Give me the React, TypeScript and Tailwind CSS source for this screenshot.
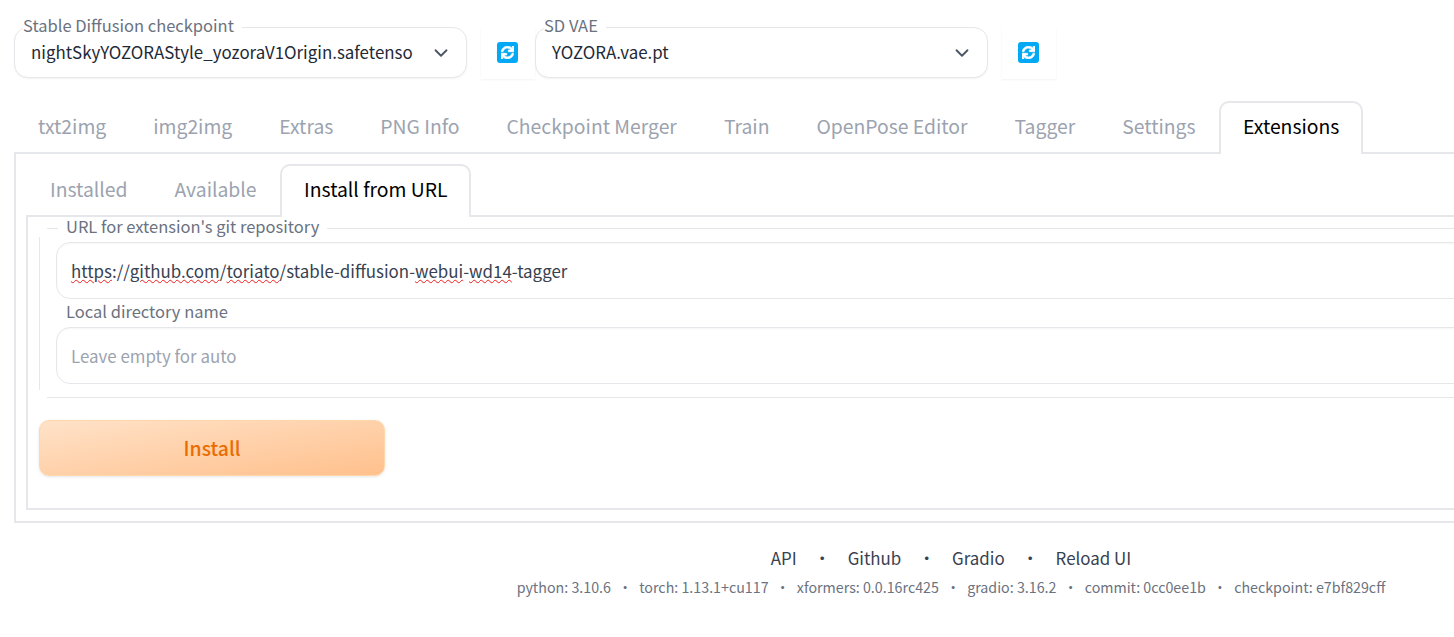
import React from "react";
import { FaSync } from "react-icons/fa";
import { ChevronDown } from "lucide-react";

const font = { fontFamily: '"Noto Sans CJK SC", "Noto Sans", sans-serif' };

function Dropdown({ label, value }: { label: string; value: string }) {
  return (
    <div className="relative w-[453px] h-[51px] mt-[27px] rounded-[14px] border border-[#e5e7eb] bg-white shadow-[0_1px_2px_rgba(0,0,0,0.05)] flex items-center pl-[16px] pr-[14px] shrink-0">
      <span className="absolute -top-[14px] left-[8px] bg-white pr-[8px] text-[16.5px] leading-[22px] text-[#6b7280]">{label}</span>
      <span className="flex-1 mr-[15px] pb-[1px] text-[16.9px] leading-[24px] text-[#1f2937] whitespace-nowrap">{value}</span>
      <ChevronDown size={22} strokeWidth={2} className="text-[#4b5563]" />
    </div>
  );
}

function Refresh() {
  return (
    <div className="ml-[14px] mt-[27px] w-[54px] h-[52px] pr-[1px] pb-[2px] bg-white shadow-[0_1px_2px_rgba(0,0,0,0.05)] flex items-center justify-center shrink-0">
      <span className="w-[21px] h-[21px] rounded-[3px] bg-[#03a9f4] flex items-center justify-center">
        <FaSync size={13} color="white" stroke="white" strokeWidth={30} />
      </span>
    </div>
  );
}

function Tab({ label, active }: { label: string; active?: boolean }) {
  return active ? (
    <div className="relative z-10 -mb-[2px] h-[53px] pb-[3px] px-[22px] flex items-center border-2 border-b-0 border-[#e5e7eb] rounded-t-[10px] bg-white text-[19.35px] text-black whitespace-nowrap">
      {label}
    </div>
  ) : (
    <div className="h-[51px] pt-[1px] px-[23.5px] flex items-center text-[19.35px] text-[#9ca3af] whitespace-nowrap">{label}</div>
  );
}

function Wavy({ children }: { children: React.ReactNode }) {
  return <span className="underline decoration-wavy decoration-[1.2px] decoration-[#ee1c1c] underline-offset-[1px]">{children}</span>;
}

export default function App() {
  return (
    <div className="w-[1454px] h-[637px] overflow-hidden bg-white" style={font}>
      <div className="w-[1902px] px-[14px]">
        <div className="flex items-start h-[101px]">
          <Dropdown label="Stable Diffusion checkpoint" value="nightSkyYOZORAStyle_yozoraV1Origin.safetenso" />
          <Refresh />
          <Dropdown label="SD VAE" value="YOZORA.vae.pt" />
          <Refresh />
        </div>

        <div className="flex items-end h-[51px] pl-[0.5px]">
          {["txt2img", "img2img", "Extras", "PNG Info", "Checkpoint Merger", "Train", "OpenPose Editor", "Tagger", "Settings"].map((t) => (
            <Tab key={t} label={t} />
          ))}
          <Tab label="Extensions" active />
        </div>

        <div className="border-2 border-[#e5e7eb] h-[371px] px-[10px] pt-[10px]">
          <div className="flex items-end h-[51px] pl-[0.5px]">
            <Tab label="Installed" />
            <Tab label="Available" />
            <Tab label="Install from URL" active />
          </div>
          <div className="border-2 border-[#e5e7eb] h-[295px] pl-[11px] pt-[11px]">
            <div className="relative h-[170px] pl-[17px] pt-[14px]">
              <div className="absolute left-0 top-[9px] h-[153px] w-px bg-[#e5e7eb]" />
              <div className="absolute left-[8px] right-0 top-0 h-px bg-[#e5e7eb]" />
              <div className="absolute left-[8px] right-0 bottom-0 h-px bg-[#e5e7eb]" />
              <span className="absolute left-[19px] -top-[11px] bg-white px-[8px] text-[16.5px] leading-[18px] text-[#6b7280]">URL for extension's git repository</span>
              <div className="h-[57px] rounded-[14px] border border-[#e5e7eb] shadow-[inset_0_1px_2px_rgba(0,0,0,0.04)] flex items-center px-[14px] text-[16.9px] text-[#374151]">
                <span>
                  <Wavy>https</Wavy>://<Wavy>github.com</Wavy>/<Wavy>toriato</Wavy>/stable-diffusion-<Wavy>webui</Wavy>-<Wavy>wd14</Wavy>-tagger
                </span>
              </div>
              <div className="h-[28px] pl-[10px] pb-[3px] flex items-center text-[16.5px] text-[#6b7280]">Local directory name</div>
              <input
                className="block w-full h-[57px] rounded-[14px] border border-[#e5e7eb] shadow-[inset_0_1px_2px_rgba(0,0,0,0.04)] px-[14px] text-[16.9px] placeholder:text-[#9ca3af] outline-none"
                placeholder="Leave empty for auto"
              />
            </div>
            <button className="block mt-[22px] w-[346px] h-[56px] rounded-[10px] border border-[#fed7aa] bg-gradient-to-br from-[#ffe2c8] to-[#ffc08c] shadow-[0_1px_3px_rgba(0,0,0,0.1)] text-[19.4px] font-medium text-[#ea6c00]">
              Install
            </button>
          </div>
        </div>

        <div className="mt-[21px] flex justify-center text-[16.9px] leading-[28px] text-[#374151]">
          <span>API</span><span className="mx-[17px]">•</span>
          <span>Github</span><span className="mx-[17px]">•</span>
          <span>Gradio</span><span className="mx-[17px]">•</span>
          <span>Reload UI</span>
        </div>
        <div className="mt-[2px] flex justify-center text-[14.25px] leading-[26px] text-[#6b7280]">
          <span>python: 3.10.6</span><span className="mx-[7px]">•</span>
          <span>torch: 1.13.1+cu117</span><span className="mx-[7px]">•</span>
          <span>xformers: 0.0.16rc425</span><span className="mx-[7px]">•</span>
          <span>gradio: 3.16.2</span><span className="mx-[7px]">•</span>
          <span>commit: 0cc0ee1b</span><span className="mx-[7px]">•</span>
          <span>checkpoint: e7bf829cff</span>
        </div>
      </div>
    </div>
  );
}
